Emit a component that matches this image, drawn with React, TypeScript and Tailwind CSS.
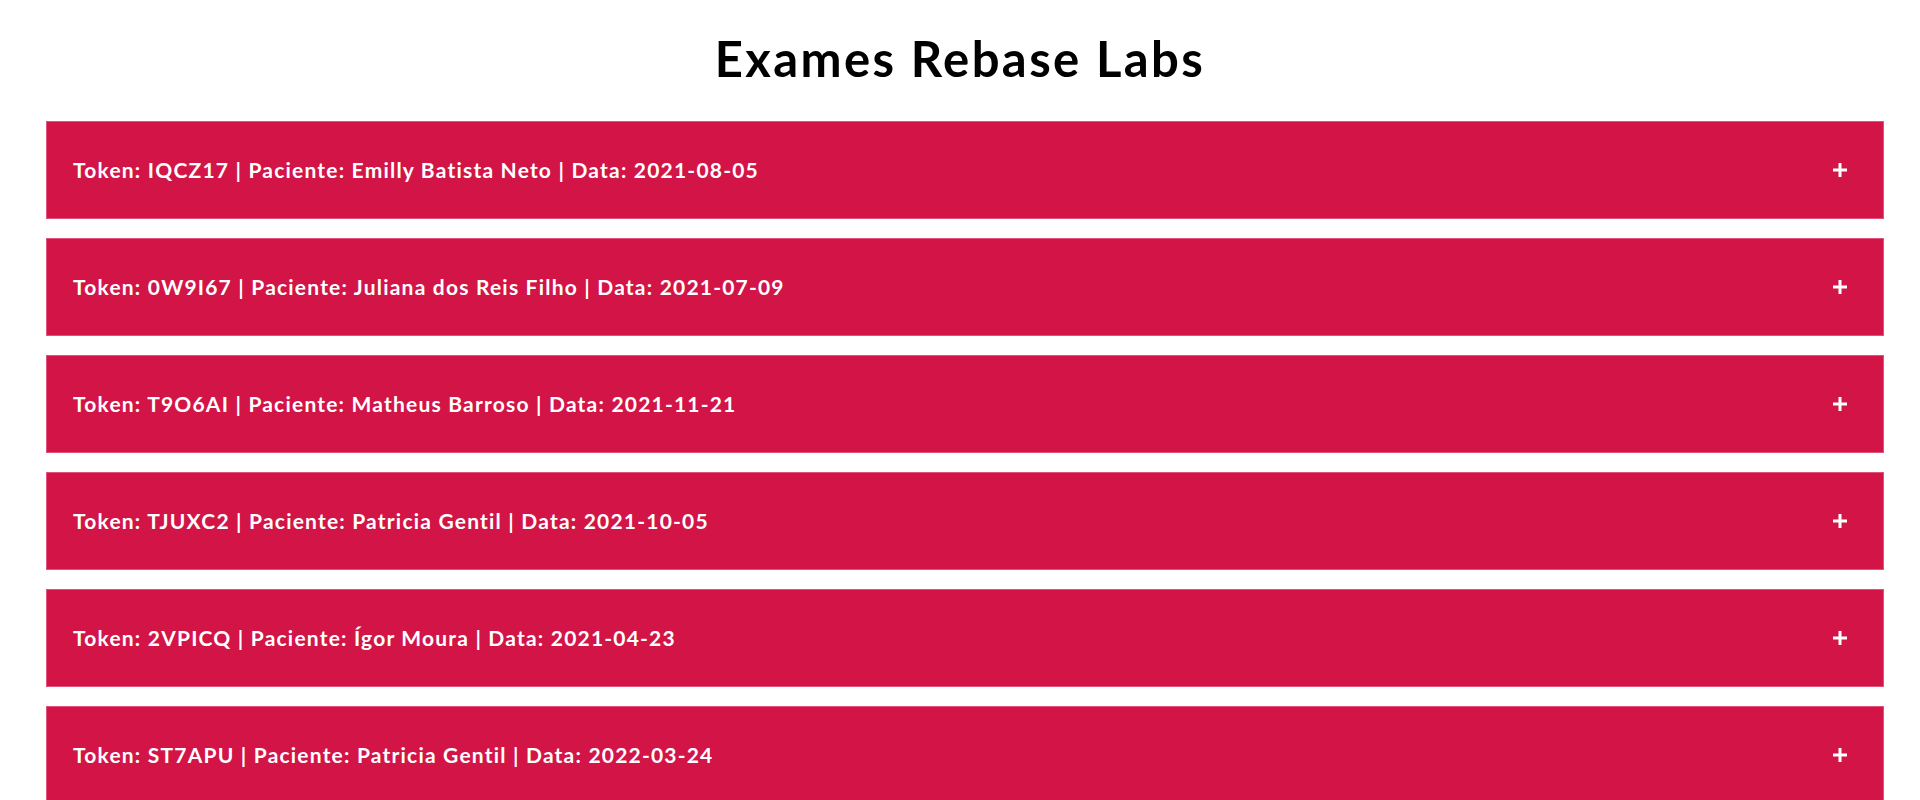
import React from 'react';

const exams = [
  { token: 'IQCZ17', patient: 'Emilly Batista Neto', date: '2021-08-05' },
  { token: '0W9I67', patient: 'Juliana dos Reis Filho', date: '2021-07-09' },
  { token: 'T9O6AI', patient: 'Matheus Barroso', date: '2021-11-21' },
  { token: 'TJUXC2', patient: 'Patricia Gentil', date: '2021-10-05' },
  { token: '2VPICQ', patient: 'Ígor Moura', date: '2021-04-23' },
  { token: 'ST7APU', patient: 'Patricia Gentil', date: '2022-03-24' },
];

function PlusIcon() {
  return (
    <svg width="14" height="14" viewBox="0 0 14 14" className="shrink-0">
      <rect x="5.5" y="0" width="3" height="14" fill="white" />
      <rect x="0" y="5.5" width="14" height="3" fill="white" />
    </svg>
  );
}

export default function App() {
  return (
    <div className="min-h-screen bg-white text-black" style={{ fontFamily: 'Lato, "Noto Sans", sans-serif' }}>
      <h1 className="pt-[28px] pb-[33px] text-center text-[49px] leading-[60px] tracking-[2.4px] font-bold text-black">
        Exames Rebase Labs
      </h1>

      <ul className="pl-[46px] pr-[36px] flex flex-col gap-[19px]">
        {exams.map((exam) => (
          <li
            key={exam.token}
            className="h-[98px] bg-[#d31446] border border-[#e0537a] flex items-center justify-between pl-[26px] pr-[36px] cursor-pointer"
          >
            <span className="text-white text-[21px] tracking-[1.2px] font-bold">
              Token: {exam.token} | Paciente: {exam.patient} | Data: {exam.date}
            </span>
            <PlusIcon />
          </li>
        ))}
      </ul>
    </div>
  );
}
